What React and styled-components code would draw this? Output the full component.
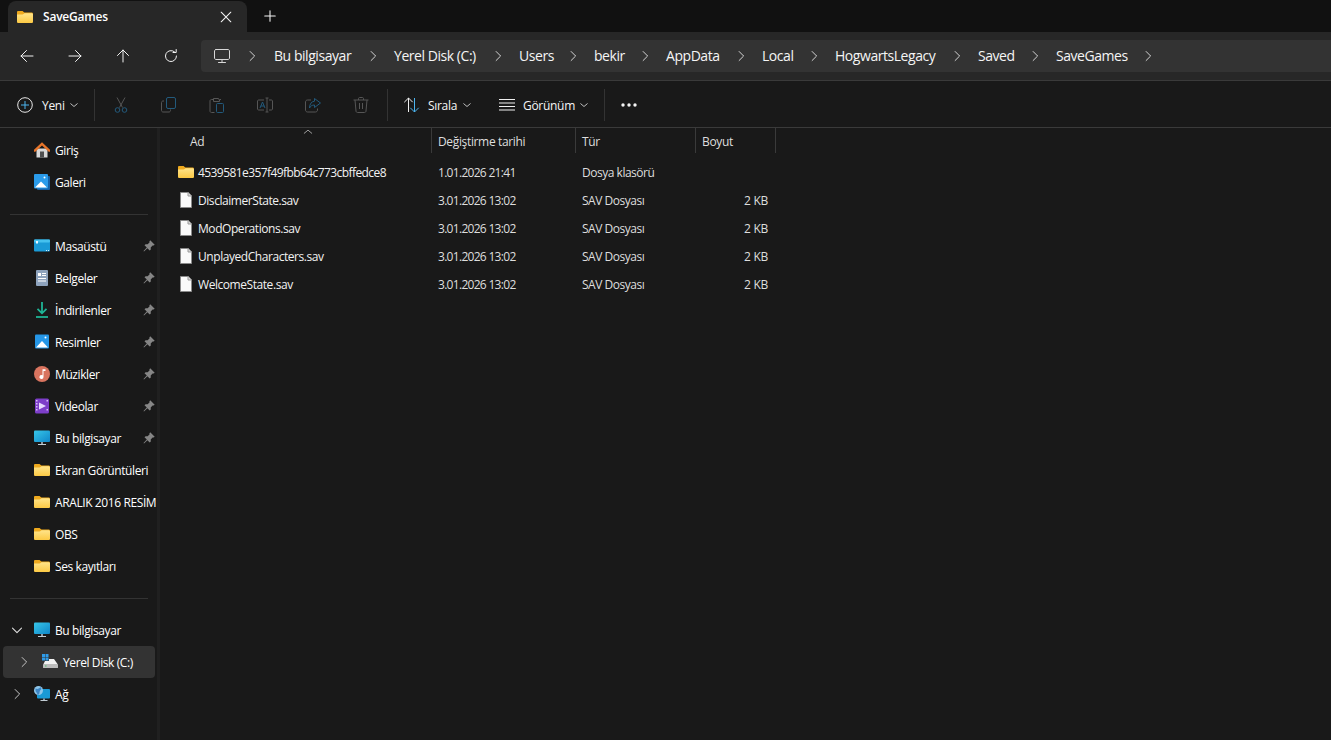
import React, { useId } from 'react'
import styled, { createGlobalStyle } from 'styled-components'

const Global = createGlobalStyle`
  html, body {
    margin: 0;
    padding: 0;
    height: 100%;
    background: #191919;
  }
  body {
    font-family: "Open Sans", "Noto Sans", "Liberation Sans", sans-serif;
    font-size: 12px;
    color: #fff;
    overflow: hidden;
  }
  svg { display: block; flex: none; }
`

const Window = styled.div`
  width: 1331px;
  height: 740px;
  display: flex;
  flex-direction: column;
  overflow: hidden;
`

const TabStrip = styled.div`
  height: 32px;
  flex: none;
  background: #111111;
  display: flex;
  align-items: flex-end;
  padding-left: 8px;
`

const Tab = styled.div`
  width: 239px;
  height: 31px;
  box-sizing: border-box;
  background: #272727;
  border-radius: 8px 8px 0 0;
  display: flex;
  align-items: center;
  padding: 0 14px 0 9px;
  gap: 10px;
`

const TabTitle = styled.span`
  flex: 1;
  font-size: 12px;
  font-weight: 600;
  letter-spacing: -0.2px;
`

const NewTab = styled.div`
  width: 46px;
  height: 32px;
  display: flex;
  align-items: center;
  justify-content: center;
`

const AddressRow = styled.div`
  height: 48px;
  flex: none;
  background: #272727;
  display: flex;
  align-items: center;
  padding-left: 3px;
  border-bottom: 1px solid #3a3a3a;
`

const NavButton = styled.div`
  width: 48px;
  height: 32px;
  display: flex;
  align-items: center;
  justify-content: center;
`

const Crumbs = styled.div`
  flex: 1;
  height: 32px;
  margin-left: 6px;
  background: #333333;
  border-radius: 4px 0 0 4px;
  display: flex;
  align-items: center;
  padding-left: 13px;
`

const CrumbChevron = styled.div`
  width: 42px;
  display: flex;
  justify-content: center;
`

const FirstChevron = styled(CrumbChevron)`
  width: 44px;
`

const Crumb = styled.span`
  width: ${({ $w }) => $w}px;
  padding-bottom: 2px;
  font-size: 14px;
  letter-spacing: -0.45px;
  white-space: nowrap;
  color: #f5f5f5;
`

const CommandBar = styled.div`
  height: 44px;
  padding-top: 2px;
  flex: none;
  background: #191919;
  display: flex;
  align-items: center;
  border-bottom: 1px solid #3a3a3a;
`

const NewButton = styled.div`
  width: 94px;
  box-sizing: border-box;
  padding-left: 17px;
  display: flex;
  align-items: center;
`

const CommandLabel = styled.span`
  width: ${({ $w }) => $w}px;
  margin-left: ${({ $gap }) => $gap}px;
  font-size: 12px;
  letter-spacing: -0.3px;
  color: #f5f5f5;
`

const CommandDivider = styled.div`
  width: 1px;
  height: 32px;
  background: #333333;
  margin-left: ${({ $before }) => $before || 0}px;
  margin-right: ${({ $after }) => $after || 0}px;
`

const IconButton = styled.div`
  width: 48px;
  display: flex;
  justify-content: center;
`

const LabelButton = styled.div`
  width: ${({ $w }) => $w}px;
  box-sizing: border-box;
  padding-left: ${({ $pad }) => $pad}px;
  display: flex;
  align-items: center;
`

const Body = styled.div`
  flex: 1;
  display: flex;
  min-height: 0;
`

const Sidebar = styled.nav`
  width: 157px;
  flex: none;
  box-sizing: border-box;
  padding-top: 6px;
  overflow: hidden;
  background: #191919;
`

const Splitter = styled.div`
  width: 3px;
  flex: none;
  background: #202020;
`

const NavRow = styled.div`
  height: 32px;
  margin: 0 ${({ $selected }) => ($selected ? '2px' : '0')} 0 ${({ $selected }) => ($selected ? '3px' : '0')};
  padding-left: ${({ $selected }) => ($selected ? '5px' : '8px')};
  background: ${({ $selected }) => ($selected ? '#333333' : 'transparent')};
  border-radius: 4px;
  display: flex;
  align-items: center;
  white-space: nowrap;
`

const NavChevron = styled.div`
  width: ${({ $w }) => $w || 18}px;
  display: flex;
  justify-content: center;
  margin-right: ${({ $after }) => $after || 8}px;
  flex: none;
`

const NavIconSlot = styled.div`
  width: 16px;
  height: 16px;
  margin-right: 5px;
  flex: none;
`

const NavText = styled.span`
  flex: 1;
  font-size: 12px;
  letter-spacing: -0.4px;
  color: #ffffff;
`

const PinSlot = styled.div`
  width: 12px;
  margin-right: 2px;
  flex: none;
`

const NavDivider = styled.div`
  height: 32px;
  display: flex;
  align-items: center;
  padding: 0 9px 0 10px;

  &::after {
    content: '';
    flex: 1;
    height: 1px;
    background: #333333;
  }
`

const Main = styled.main`
  flex: 1;
  background: #191919;
  min-width: 0;
`

const ColumnHead = styled.div`
  height: 25px;
  display: flex;
  position: relative;
`

const HeadCell = styled.div`
  width: ${({ $w }) => $w}px;
  box-sizing: border-box;
  padding-left: ${({ $pad }) => $pad || 6}px;
  padding-top: 1px;
  display: flex;
  align-items: center;
  border-right: 1px solid #3a3a3a;
  font-size: 12px;
  letter-spacing: -0.35px;
  color: #dedede;
`

const SortCaret = styled.div`
  position: absolute;
  left: 143px;
  top: -1px;
`

const FileList = styled.div`
  padding-top: 5px;
`

const FileRow = styled.div`
  height: 28px;
  display: flex;
  align-items: center;
  font-size: 12px;
  color: #dedede;
`

const NameCell = styled.div`
  width: 272px;
  box-sizing: border-box;
  padding-left: 18px;
  display: flex;
  align-items: center;
  gap: 4px;
  color: #f2f2f2;
  letter-spacing: ${({ $hash }) => ($hash ? '-0.58px' : '-0.44px')};
  white-space: nowrap;
`

const DateCell = styled.div`
  width: 144px;
  box-sizing: border-box;
  padding-left: 6px;
  letter-spacing: -0.7px;
`

const TypeCell = styled.div`
  width: 120px;
  box-sizing: border-box;
  padding-left: 6px;
  letter-spacing: -0.48px;
`

const SizeCell = styled.div`
  width: 79px;
  box-sizing: border-box;
  padding-right: 7px;
  text-align: right;
  letter-spacing: -0.3px;
`

const Line = ({ d, size = 16, color = '#f2f2f2', width = 1 }) => (
  <svg width={size} height={size} viewBox="0 0 16 16" fill="none" stroke={color} strokeWidth={width} strokeLinecap="round" strokeLinejoin="round">
    <path d={d} />
  </svg>
)

const Folder = ({ size = 16 }) => {
  const id = useId()
  return (
    <svg width={size} height={size} viewBox="0 0 16 16">
      <defs>
        <linearGradient id={id} x1="0" y1="0" x2="0" y2="1">
          <stop offset="0" stopColor="#ffe48a" />
          <stop offset="1" stopColor="#fcc944" />
        </linearGradient>
      </defs>
      <path d="M0 3.2C0 2.5.5 2 1.2 2h3.9c.4 0 .7.1 1 .4L7.4 3.6h7.3c.7 0 1.3.6 1.3 1.3v1H0z" fill="#eea91e" />
      <path d="M0 5.6h5.4c.5 0 .9-.2 1.2-.5l.9-.8h7.2c.7 0 1.3.6 1.3 1.3v7.1c0 .7-.6 1.3-1.3 1.3H1.3C.6 14 0 13.4 0 12.7z" fill={`url(#${id})`} />
    </svg>
  )
}

const FileIcon = () => (
  <svg width="16" height="16" viewBox="0 0 16 16">
    <path d="M2.5.5h7.700l3.300 3.300v11.700H2.500z" fill="#fafafa" stroke="#8a8a8a" />
    <path d="M10 .5v3.500h3.500" fill="#d8d8d8" stroke="#9a9a9a" />
  </svg>
)

const Pin = () => (
  <svg width="12" height="12" viewBox="0 0 12 12" fill="#868686">
    <path d="M7.200.3l4.500 4.500-1.100.8-1-.1-1.900 1.900.1 2-1.100 1.100-2.300-2.300L1 11.500l-.5-.5 3.300-3.400L1.500 5.300l1.100-1.100 2 .1 1.900-1.900-.1-1z" />
  </svg>
)

const HomeIcon = () => (
  <svg width="16" height="16" viewBox="0 0 16 16">
    <path d="M2.500 6.500h11V15.500h-11z" fill="#d8d8d8" />
    <path d="M6 9.500h4v6H6z" fill="#4f4f4f" />
    <path d="M8 .300L0 7.800V9.800h1.300L8 3.600l6.700 6.200H16V7.800z" fill="#e8752a" />
  </svg>
)

const GalleryIcon = () => (
  <svg width="16" height="16" viewBox="0 0 16 16">
    <rect x="3" y="2" width="13" height="14" rx="1" fill="#1461a8" />
    <rect x="0" y="0" width="14" height="14.500" rx="1" fill="#2a9bea" />
    <path d="M1 13.500l6-6 6 6z" fill="#ffffff" />
    <circle cx="10.500" cy="3.500" r="1" fill="#ffffff" />
  </svg>
)

const DesktopIcon = () => (
  <svg width="16" height="16" viewBox="0 0 16 16">
    <rect x="0" y="1.500" width="16" height="12" rx="1" fill="#1a9ad6" />
    <rect x="0" y="1.500" width="16" height="3" rx="1" fill="#45c1ee" />
    <rect x="2" y="3" width="2" height="2.500" fill="#e6f6ff" />
    <rect x="12" y="12" width="1" height="1" fill="#d5f0ff" />
    <rect x="14" y="12" width="1" height="1" fill="#d5f0ff" />
  </svg>
)

const DocIcon = () => (
  <svg width="16" height="16" viewBox="0 0 16 16">
    <rect x="2" y="0" width="12" height="16" rx="1" fill="#8ea3bd" />
    <path d="M4 3h3v3H4zM8 3h4v1H8zM8 5h4v1H8zM4 8h8v1H4zM4 10.500h8v1H4z" fill="#ffffff" />
  </svg>
)

const DownloadIcon = () => (
  <svg width="16" height="16" viewBox="0 0 16 16" fill="none" stroke="#1fb495" strokeWidth="1.800">
    <path d="M8 0v11M3.500 6.800L8 11.300l4.500-4.500" />
    <path d="M2 15h12" />
  </svg>
)

const PictureIcon = () => (
  <svg width="16" height="16" viewBox="0 0 16 16">
    <rect x="1" y="0.500" width="14" height="14" rx="1" fill="#2596e6" />
    <path d="M2 13.500l6-6.500 6 6.500z" fill="#ffffff" />
    <circle cx="11.500" cy="3.500" r="1" fill="#ffffff" />
  </svg>
)

const MusicIcon = () => (
  <svg width="16" height="16" viewBox="0 0 16 16">
    <circle cx="8" cy="8" r="8" fill="#d9745f" />
    <path d="M8.500 3.200h3v1.700H9.500V11a2 2 0 1 1-1-1.700z" fill="#ffffff" />
  </svg>
)

const VideoIcon = () => (
  <svg width="16" height="16" viewBox="0 0 16 16">
    <rect x="1" y="0.500" width="14" height="15" rx="1.500" fill="#7d3ec9" />
    <path d="M5 4.500l7 3.500-7 3.500z" fill="#e6d8ff" />
    <path d="M2 2h1.500v1.500H2zM2 5h1.500v1.500H2zM2 8h1.500v1.500H2zM2 11h1.500v1.500H2zM12.500 2H14v1.500h-1.500zM12.500 11H14v1.500h-1.500z" fill="#d6bdf5" />
  </svg>
)

const PcIcon = () => {
  const id = useId()
  return (
    <svg width="16" height="16" viewBox="0 0 16 16">
      <defs>
        <linearGradient id={id} x1="0" y1="0" x2="1" y2="1">
          <stop offset="0" stopColor="#37c6e8" />
          <stop offset="1" stopColor="#0f86c9" />
        </linearGradient>
      </defs>
      <rect x="0" y="0.500" width="16" height="11.500" rx="1" fill={`url(#${id})`} />
      <path d="M7 12h2v2H7z" fill="#8d9aa5" />
      <path d="M4 14h8v1H4z" fill="#c2ccd4" />
    </svg>
  )
}

const DiskIcon = () => (
  <svg width="16" height="16" viewBox="0 0 16 16">
    <path d="M0 0h3v3H0zM3.500 0h3v3h-3zM0 3.500h3v3H0zM3.500 3.500h3v3h-3z" fill="#2f9be8" />
    <path d="M7 5h5l3.500 5H1.500L3 7h4z" fill="#f2f2f2" />
    <rect x="1" y="10" width="15" height="4" rx=".5" fill="#bdbdbd" />
    <rect x="3" y="11.500" width="1.500" height="1" fill="#47c26a" />
  </svg>
)

const NetworkIcon = () => (
  <svg width="16" height="16" viewBox="0 0 16 16">
    <rect x="3" y="3" width="13" height="9.500" rx="1" fill="#1a9ad6" />
    <path d="M9 12.500h2v1.500H9z" fill="#8d9aa5" />
    <path d="M6.500 14h7v1h-7z" fill="#c2ccd4" />
    <circle cx="4.500" cy="4.500" r="4.500" fill="#8fc6ea" />
    <path d="M1.500 2.500c2 1 4 0 5-1.500l1 2c-1 1-2 2-2 3.500s-1 2.500-2 2.500c0-2-2-3-2-4.500z" fill="#3d86c6" />
  </svg>
)

const muted = '#565656'
const mutedBlue = '#235a7c'

const Scissors = () => (
  <svg width="16" height="16" viewBox="0 0 16 16" fill="none">
    <path d="M4 .5l5.500 10M12 .5L6.500 10.500" stroke={muted} />
    <circle cx="4.500" cy="13" r="2.300" stroke={mutedBlue} />
    <circle cx="11.500" cy="13" r="2.300" stroke={mutedBlue} />
  </svg>
)

const Copy = () => (
  <svg width="16" height="16" viewBox="0 0 16 16" fill="none">
    <path d="M3 4H2C1.200 4 .5 4.700.5 5.500v8c0 .8.700 1.500 1.500 1.500h6c.8 0 1.500-.7 1.500-1.500v-1" stroke={muted} />
    <rect x="5.500" y=".5" width="9" height="11" rx="1.500" stroke={mutedBlue} />
  </svg>
)

const Paste = () => (
  <svg width="16" height="16" viewBox="0 0 16 16" fill="none">
    <path d="M4 2.500H2.500C1.600 2.500 1 3.100 1 4v10c0 .9.600 1.500 1.500 1.500h3M12 2.500h-1.500v2h-6v-3h5v1" stroke={muted} />
    <rect x="7.500" y="6.500" width="7" height="9" rx="1" stroke={mutedBlue} />
  </svg>
)

const Rename = () => (
  <svg width="16" height="16" viewBox="0 0 16 16" fill="none">
    <path d="M7 3H1.500C1 3 .5 3.500 .5 4v8c0 .5.500 1 1 1H7M12 3h2.500c.5 0 1 .5 1 1v8c0 .5-.5 1-1 1H12" stroke={muted} />
    <path d="M8.500 1h3M8.500 15h3M10 1v14" stroke={muted} />
    <path d="M3 11l2.500-6L8 11M3.800 9h3.400" stroke={mutedBlue} />
  </svg>
)

const Share = () => (
  <svg width="16" height="16" viewBox="0 0 16 16" fill="none">
    <path d="M6 3H2.500C1.400 3 .5 3.900 .5 5v8c0 1.100.9 2 2 2h8c1.100 0 2-.9 2-2v-1.500" stroke={muted} />
    <path d="M9.500 1.500l6 4.500-6 4.500V8C7 8 5.500 9 4.500 11c0-4 2-6.500 5-6.800z" stroke={mutedBlue} />
  </svg>
)

const Trash = () => (
  <svg width="16" height="16" viewBox="0 0 16 16" fill="none" stroke={muted}>
    <path d="M.5 3h15M5.500 3V1.500c0-.5.500-1 1-1h3c.5 0 1 .5 1 1V3M2 3l1 11c0 .9.700 1.500 1.500 1.500h7c.8 0 1.500-.6 1.500-1.500l1-11M6.500 6v6M9.500 6v6" />
  </svg>
)

const SortIcon = () => (
  <svg width="17" height="16" viewBox="0 0 16 16" fill="none">
    <path d="M5 15V1M.8 5.200L5 1l4.200 4.200" stroke="#f0f0f0" />
    <path d="M11 1v14M6.800 10.800L11 15l4.200-4.200" stroke="#4cb4ee" />
  </svg>
)

const ViewIcon = () => (
  <svg width="16" height="16" viewBox="0 0 16 16" stroke="#f0f0f0">
    <path d="M0 2.500h16M0 6h16M0 9.500h16M0 13h16" />
  </svg>
)

const PlusCircle = () => (
  <svg width="16" height="16" viewBox="0 0 16 16" fill="none">
    <circle cx="8" cy="8" r="7.300" stroke="#e6e6e6" />
    <path d="M8 4v8M4 8h8" stroke="#4cb4ee" />
  </svg>
)

const Dots = () => (
  <svg width="16" height="4" viewBox="0 0 16 4" fill="#f5f5f5">
    <circle cx="2" cy="2" r="1.700" />
    <circle cx="8" cy="2" r="1.700" />
    <circle cx="14" cy="2" r="1.700" />
  </svg>
)

const SmallDown = () => <Line size={8} d="M1.500 5.500L8 11l6.500-5.500" color="#bdbdbd" width={2} />
const Right = ({ size = 12, color = '#d8d8d8' }) => <Line size={size} d="M5.500 2l6 6-6 6" color={color} width={1.3} />

const crumbs = [
  ['Bu bilgisayar', 78],
  ['Yerel Disk (C:)', 83],
  ['Users', 33],
  ['bekir', 30],
  ['AppData', 54],
  ['Local', 31],
  ['HogwartsLegacy', 101],
  ['Saved', 36],
  ['SaveGames', 71],
]

const pinned = [
  ['Masaüstü', DesktopIcon],
  ['Belgeler', DocIcon],
  ['İndirilenler', DownloadIcon],
  ['Resimler', PictureIcon],
  ['Müzikler', MusicIcon],
  ['Videolar', VideoIcon],
  ['Bu bilgisayar', PcIcon],
]

const folders = ['Ekran Görüntüleri', 'ARALIK 2016 RESİM', 'OBS', 'Ses kayıtları']

const files = ['DisclaimerState.sav', 'ModOperations.sav', 'UnplayedCharacters.sav', 'WelcomeState.sav']

const SideItem = ({ icon: Icon, label, pin, chevron }) => (
  <NavRow>
    <NavChevron>{chevron}</NavChevron>
    <NavIconSlot><Icon /></NavIconSlot>
    <NavText>{label}</NavText>
    {pin && <PinSlot><Pin /></PinSlot>}
  </NavRow>
)

export default function App() {
  return (
    <Window>
      <Global />
      <TabStrip>
        <Tab>
          <Folder />
          <TabTitle>SaveGames</TabTitle>
          <Line size={14} d="M2.500 2.500l11 11M13.500 2.500l-11 11" color="#f5f5f5" width={1.2} />
        </Tab>
        <NewTab>
          <Line size={14} d="M8 2v12M2 8h12" color="#f5f5f5" width={1.2} />
        </NewTab>
      </TabStrip>

      <AddressRow>
        <NavButton><Line d="M14 8H2M7.500 2.500L2 8l5.500 5.500" /></NavButton>
        <NavButton><Line d="M2 8h12M8.500 2.500L14 8l-5.500 5.500" /></NavButton>
        <NavButton><Line d="M8 14V2M2.500 7.500L8 2l5.500 5.500" /></NavButton>
        <NavButton><Line d="M13.500 8A5.500 5.500 0 1 1 11.500 3.800M10 4.500h3.200V1.500" /></NavButton>
        <Crumbs>
          <Line d="M2 1.500h12c.8 0 1.500.7 1.500 1.500v7c0 .8-.7 1.500-1.500 1.500H2c-.8 0-1.500-.7-1.500-1.500V3c0-.8.700-1.500 1.500-1.500zM8 11.500v3M4.500 14.500h7" color="#d8d8d8" />
          <FirstChevron><Right /></FirstChevron>
          {crumbs.map(([label, w]) => (
            <React.Fragment key={label}>
              <Crumb $w={w}>{label}</Crumb>
              <CrumbChevron><Right /></CrumbChevron>
            </React.Fragment>
          ))}
        </Crumbs>
      </AddressRow>

      <CommandBar>
        <NewButton>
          <PlusCircle />
          <CommandLabel $w={28} $gap={9}>Yeni</CommandLabel>
          <SmallDown />
        </NewButton>
        <CommandDivider $after={2} />
        <IconButton><Scissors /></IconButton>
        <IconButton><Copy /></IconButton>
        <IconButton><Paste /></IconButton>
        <IconButton><Rename /></IconButton>
        <IconButton><Share /></IconButton>
        <IconButton><Trash /></IconButton>
        <CommandDivider $before={2} />
        <LabelButton $w={96} $pad={15}>
          <SortIcon />
          <CommandLabel $w={35} $gap={8}>Sırala</CommandLabel>
          <SmallDown />
        </LabelButton>
        <LabelButton $w={120} $pad={15}>
          <ViewIcon />
          <CommandLabel $w={57} $gap={8}>Görünüm</CommandLabel>
          <SmallDown />
        </LabelButton>
        <CommandDivider />
        <LabelButton $w={48} $pad={16}><Dots /></LabelButton>
      </CommandBar>

      <Body>
        <Sidebar>
          <SideItem icon={HomeIcon} label="Giriş" />
          <SideItem icon={GalleryIcon} label="Galeri" />
          <NavDivider />
          {pinned.map(([label, Icon]) => (
            <SideItem key={label} icon={Icon} label={label} pin />
          ))}
          {folders.map((label) => (
            <SideItem key={label} icon={Folder} label={label} />
          ))}
          <NavDivider />
          <SideItem
            icon={PcIcon}
            label="Bu bilgisayar"
            chevron={<Line size={12} d="M2 5.500l6 6 6-6" color="#e0e0e0" width={1.4} />}
          />
          <NavRow $selected>
            <NavChevron $w={32} $after={2}><Right color="#c8c8c8" /></NavChevron>
            <NavIconSlot><DiskIcon /></NavIconSlot>
            <NavText>Yerel Disk (C:)</NavText>
          </NavRow>
          <SideItem icon={NetworkIcon} label="Ağ" chevron={<Right color="#c8c8c8" />} />
        </Sidebar>
        <Splitter />
        <Main>
          <ColumnHead>
            <SortCaret>
              <Line size={10} d="M2 10l6-5 6 5" color="#b0b0b0" width={1.4} />
            </SortCaret>
            <HeadCell $w={272} $pad={30}>Ad</HeadCell>
            <HeadCell $w={144}>Değiştirme tarihi</HeadCell>
            <HeadCell $w={120}>Tür</HeadCell>
            <HeadCell $w={80}>Boyut</HeadCell>
          </ColumnHead>
          <FileList>
            <FileRow>
              <NameCell $hash><Folder />4539581e357f49fbb64c773cbffedce8</NameCell>
              <DateCell>1.01.2026 21:41</DateCell>
              <TypeCell>Dosya klasörü</TypeCell>
            </FileRow>
            {files.map((name) => (
              <FileRow key={name}>
                <NameCell><FileIcon />{name}</NameCell>
                <DateCell>3.01.2026 13:02</DateCell>
                <TypeCell>SAV Dosyası</TypeCell>
                <SizeCell>2 KB</SizeCell>
              </FileRow>
            ))}
          </FileList>
        </Main>
      </Body>
    </Window>
  )
}
